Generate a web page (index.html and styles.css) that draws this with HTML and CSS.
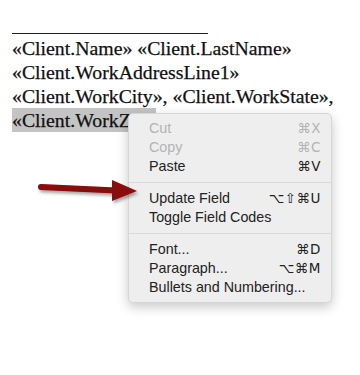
FILE: index.html
```html
<!DOCTYPE html>
<html lang="en">
<head>
    <meta charset="UTF-8">
    <meta name="viewport" content="width=device-width, initial-scale=1.0">
    <title>Update Field</title>
    <link rel="stylesheet" href="styles.css">
</head>
<body>
    <div class="doc">
        <div class="rule"></div>
        <p class="line">«Client.Name» «Client.LastName»</p>
        <p class="line">«Client.WorkAddressLine1»</p>
        <p class="line">«Client.WorkCity», «Client.WorkState»,</p>
        <p class="line"><span class="selected">«Client.WorkZip»</span></p>
    </div>

    <div class="menu">
        <div class="item disabled"><span>Cut</span><span class="key">⌘X</span></div>
        <div class="item disabled"><span>Copy</span><span class="key">⌘C</span></div>
        <div class="item"><span>Paste</span><span class="key">⌘V</span></div>
        <div class="sep"></div>
        <div class="item"><span>Update Field</span><span class="key">⌥⇧⌘U</span></div>
        <div class="item"><span>Toggle Field Codes</span></div>
        <div class="sep"></div>
        <div class="item"><span>Font...</span><span class="key">⌘D</span></div>
        <div class="item"><span>Paragraph...</span><span class="key">⌥⌘M</span></div>
        <div class="item"><span>Bullets and Numbering...</span></div>
    </div>

    <svg class="arrow" width="115" height="40" viewBox="0 0 115 40">
        <defs>
            <filter id="shadow" x="-20%" y="-50%" width="140%" height="200%">
                <feDropShadow dx="1.5" dy="2.5" stdDeviation="1.5" flood-color="#000" flood-opacity="0.35"/>
            </filter>
        </defs>
        <g filter="url(#shadow)">
            <path d="M9 13 L84 16.5" stroke="#8a0808" stroke-width="6" stroke-linecap="round"/>
            <path d="M80 6 L105 17 L80 27 Z" fill="#8a0808"/>
        </g>
    </svg>
</body>
</html>
```

FILE: styles.css
```css
body {
    margin: 0;
    background-color: #ffffff;
    width: 360px;
    height: 375px;
    position: relative;
    overflow: hidden;
}
.doc {
    padding: 20px 0 0 12px;
    font-family: "Liberation Serif", serif;
    font-size: 19.8px;
    color: #111;
    -webkit-text-stroke: 0.25px #111;
}
.rule {
    width: 196px;
    height: 13px;
    border-bottom: 1px solid #222;
    margin-bottom: 2px;
}
.line {
    margin: 0;
    line-height: 24px;
    white-space: nowrap;
}
.selected {
    background-color: #c4c4c4;
    padding: 1px 0 1px;
}
.arrow {
    position: absolute;
    left: 32px;
    top: 174px;
}
.menu {
    position: absolute;
    left: 128px;
    top: 113px;
    width: 202px;
    padding: 5px 0 5px;
    background-color: #eeeeee;
    border: 1px solid #d6d6d6;
    border-radius: 5px;
    box-shadow: 0 4px 12px rgba(0, 0, 0, 0.22);
    font-family: "Liberation Sans", Arial, sans-serif;
    font-size: 14.3px;
    color: #222;
}
.item {
    display: flex;
    justify-content: space-between;
    height: 19px;
    line-height: 19px;
    padding: 0 10px 0 20px;
}
.disabled {
    color: #b3b3b3;
}
.key {
    font-family: "DejaVu Sans", sans-serif;
    font-size: 13.5px;
    letter-spacing: 0.5px;
}
.sep {
    height: 1px;
    background-color: #d9d9d9;
    margin: 6px 0 6px;
}
```
